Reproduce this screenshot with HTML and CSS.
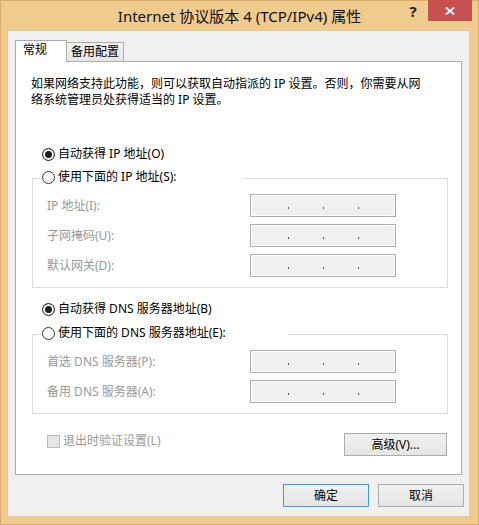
FILE: index.html
```html
<!DOCTYPE html>
<html lang="zh-CN">
<head>
  <meta charset="UTF-8" />
  <title>Internet 协议版本 4 (TCP/IPv4) 属性</title>
  <link rel="stylesheet" href="styles.css">
</head>
<body>
  <div class="window">
    <!-- Caption bar -->
    <div class="titlebar">
      <span></span>
      <span class="title">Internet 协议版本 4 (TCP/IPv4) 属性</span>
      <div class="caption-buttons">
        <span class="help">?</span>
        <span class="close">
          <svg width="10" height="8" viewBox="0 0 10 8">
            <path d="M0.8 0.5 L9.2 7.5 M9.2 0.5 L0.8 7.5" stroke="#fff" stroke-width="1.8" fill="none" />
          </svg>
        </span>
      </div>
    </div>

    <div class="client">
      <div class="tabs">
        <div class="tab active">常规</div>
        <div class="tab">备用配置</div>
      </div>

      <div class="panel">
        <p class="intro">如果网络支持此功能，则可以获取自动指派的 IP 设置。否则，你需要从网<br>络系统管理员处获得适当的 IP 设置。</p>

        <div class="radio-row first">
          <label class="radio checked"><span class="dot"></span>自动获得 IP 地址(O)</label>
        </div>

        <fieldset class="group">
          <legend class="ip-legend">
            <label class="radio"><span class="dot"></span>使用下面的 IP 地址(S):</label>
          </legend>
          <div class="field">
            <span class="field-label">IP 地址(I):</span>
            <div class="ip-box"><i></i><i></i><i></i></div>
          </div>
          <div class="field">
            <span class="field-label">子网掩码(U):</span>
            <div class="ip-box"><i></i><i></i><i></i></div>
          </div>
          <div class="field">
            <span class="field-label">默认网关(D):</span>
            <div class="ip-box"><i></i><i></i><i></i></div>
          </div>
        </fieldset>

        <div class="radio-row">
          <label class="radio checked"><span class="dot"></span>自动获得 DNS 服务器地址(B)</label>
        </div>

        <fieldset class="group dns">
          <legend class="dns-legend">
            <label class="radio"><span class="dot"></span>使用下面的 DNS 服务器地址(E):</label>
          </legend>
          <div class="field">
            <span class="field-label">首选 DNS 服务器(P):</span>
            <div class="ip-box"><i></i><i></i><i></i></div>
          </div>
          <div class="field">
            <span class="field-label">备用 DNS 服务器(A):</span>
            <div class="ip-box"><i></i><i></i><i></i></div>
          </div>
        </fieldset>

        <div class="panel-footer">
          <label class="check"><span class="box"></span>退出时验证设置(L)</label>
          <button class="btn advanced">高级(V)...</button>
        </div>
      </div>

      <div class="dialog-buttons">
        <button class="btn default">确定</button>
        <button class="btn">取消</button>
      </div>
    </div>
  </div>
</body>
</html>
```

FILE: styles.css
```css
body {
  margin: 0;
  font-family: "Noto Sans", "Noto Sans CJK SC", sans-serif;
  font-size: 12px;
  line-height: 16px;
  color: #000;
}
.window {
  width: 479px;
  height: 525px;
  box-sizing: border-box;
  display: flex;
  flex-direction: column;
  background: #f0cb8e;
  border: 1px solid #d9ad6b;
  padding: 0 8px 7px 6px;
}
.titlebar {
  display: grid;
  grid-template-columns: 1fr auto 1fr;
  height: 30px;
  margin: -1px -9px 0 -7px;
}
.title {
  font-size: 15px;
  line-height: 30px;
  padding-top: 1px;
  white-space: nowrap;
  color: #111;
}
.caption-buttons {
  display: flex;
  justify-content: flex-end;
  align-items: flex-start;
  padding-right: 7px;
}
.help {
  width: 22px;
  height: 21px;
  margin-right: 4px;
  text-align: center;
  font-size: 15px;
  font-weight: bold;
  line-height: 23px;
  color: #222;
}
.close {
  width: 44px;
  height: 21px;
  background: #c75050;
  display: flex;
  justify-content: center;
  align-items: center;
  padding-top: 1px;
  box-sizing: border-box;
}
.client {
  flex: 1;
  background: #f0f0f0;
  border: 1px solid #e2c899;
}
.tabs {
  display: flex;
  align-items: flex-end;
  margin: 9px 0 0 7px;
}
.tab {
  box-sizing: border-box;
  height: 19px;
  width: 58px;
  padding: 1px 0 0 4px;
  border: 1px solid #acacac;
  border-bottom: none;
  background: linear-gradient(#f0f0f0, #e5e5e5);
  margin-left: -1px;
  white-space: nowrap;
}
.tab.active {
  position: relative;
  z-index: 1;
  height: 22px;
  width: 52px;
  padding-left: 7px;
  margin-left: 0;
  margin-bottom: -1px;
  background: #fff;
}
.panel {
  box-sizing: border-box;
  height: 414px;
  margin: 0 7px 0 7px;
  background: #fff;
  border: 1px solid #acacac;
}
.intro {
  margin: 14px 0 0 15px;
  white-space: nowrap;
}
.radio-row {
  padding-left: 26px;
  margin-top: 13px;
}
.radio-row.first {
  margin-top: 38px;
}
.radio {
  display: flex;
  align-items: center;
  gap: 3px;
  height: 16px;
  white-space: nowrap;
}
.radio .dot {
  width: 13px;
  height: 13px;
  box-sizing: border-box;
  border: 1px solid #333;
  border-radius: 50%;
  background: #fff;
}
.radio.checked .dot {
  background: #1e1e1e;
  box-shadow: inset 0 0 0 2px #fff;
}
.group {
  margin: 7px 13px 0 16px;
  padding: 7px 0 10px 14px;
  border: 1px solid #dcdcdc;
  display: grid;
  grid-template-columns: 203px 146px;
  grid-auto-rows: 23px;
  row-gap: 7px;
}
.group.dns {
  margin-top: 8px;
}
.group legend {
  margin-left: -6px;
  padding: 0 0 2px 1px;
  box-sizing: border-box;
}
.ip-legend {
  width: 201px;
}
.dns-legend {
  width: 247px;
}
.field {
  display: contents;
}
.field-label {
  color: #999;
  line-height: 22px;
  padding-top: 1px;
  white-space: nowrap;
}
.ip-box {
  box-sizing: border-box;
  height: 23px;
  border: 1px solid #abadb3;
  box-shadow: inset 0 0 0 1px #fff;
  background: #f0f0f0;
  display: flex;
  align-items: flex-start;
  gap: 34px;
  padding: 12px 0 0 37px;
}
.ip-box i {
  width: 1px;
  height: 2px;
  background: #555;
}
.panel-footer {
  display: flex;
  justify-content: space-between;
  align-items: flex-start;
  margin-top: 19px;
  padding: 0 14px 0 31px;
}
.check {
  display: flex;
  align-items: center;
  gap: 3px;
  height: 16px;
  color: #999;
}
.check .box {
  width: 13px;
  height: 13px;
  box-sizing: border-box;
  border: 1px solid #bcbcbc;
  background: #e6e6e6;
}
.btn {
  font: inherit;
  color: #000;
  height: 23px;
  width: 86px;
  padding: 0;
  border: 1px solid #acacac;
  background: linear-gradient(#f0f0f0, #e5e5e5);
}
.btn.advanced {
  width: 103px;
}
.btn.default {
  border-color: #3399ff;
}
.dialog-buttons {
  display: flex;
  justify-content: flex-end;
  gap: 9px;
  margin: 9px 5px 0 0;
}
```
